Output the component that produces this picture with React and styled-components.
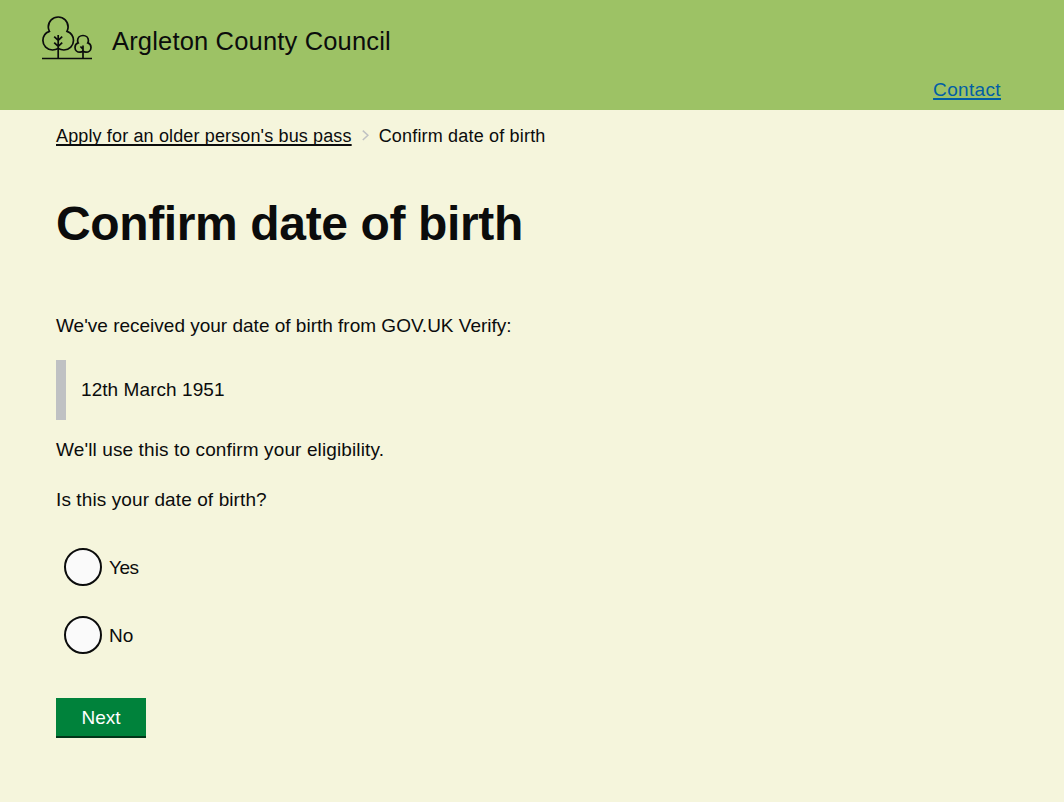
import React from "react";
import styled, { createGlobalStyle } from "styled-components";

const GlobalStyle = createGlobalStyle`
  html, body { margin: 0; background: #f5f5dc; }
  body {
    font-family: "Helvetica Neue", "Liberation Sans", Arial, sans-serif;
    font-size: 19px;
    line-height: 25px;
    color: #0b0c0c;
    -webkit-font-smoothing: antialiased;
  }
`;

const Header = styled.header`
  box-sizing: border-box;
  height: 110px;
  padding: 16px 63px 8px 42px;
  background: #9dc265;
  display: flex;
  flex-direction: column;
  justify-content: space-between;
`;

const Brand = styled.div`
  display: flex;
  align-items: flex-start;
  gap: 20px;
`;

const Logo = styled.svg`
  display: block;
  width: 50px;
  height: 45px;
`;

const CouncilName = styled.span`
  font-size: 25.5px;
  line-height: 30px;
  padding-top: 10px;
  letter-spacing: ${(p) => p.$track || 0}px;
`;

const Text = styled.span`
  letter-spacing: ${(p) => p.$track || 0}px;
`;

const Nav = styled.nav`
  display: flex;
  justify-content: flex-end;
`;

const Link = styled.a`
  color: ${(p) => p.$color || "#0b0c0c"};
  letter-spacing: ${(p) => p.$track || 0}px;
  text-decoration: underline;
  text-decoration-thickness: 2px;
  text-underline-offset: 2px;
  text-decoration-skip-ink: none;
`;

const Main = styled.main`
  padding: 14px 56px 0;
`;

const Breadcrumbs = styled.nav`
  display: flex;
  align-items: center;
  height: 25px;
  font-size: 18px;
`;

const Chevron = styled.svg`
  width: 7px;
  height: 12px;
  margin: 0 10px 2px;
`;

const Title = styled.h1`
  margin: 50px 0 64px;
  font-size: 48px;
  line-height: 50px;
  font-weight: 700;
  letter-spacing: ${(p) => p.$track || 0}px;
`;

const Paragraph = styled.p`
  margin: 0 0 25px;
`;

const Inset = styled.div`
  margin: -3px 0 17px;
  padding: 17px 15px 18px;
  border-left: 10px solid #bfc1c3;
`;

const Options = styled.div`
  display: flex;
  flex-direction: column;
  gap: 30px;
  padding: 11px 0 0 8px;
`;

const Option = styled.label`
  display: flex;
  align-items: center;
  gap: 7px;
  height: 38px;
`;

const Radio = styled.input`
  appearance: none;
  box-sizing: border-box;
  width: 38px;
  height: 38px;
  margin: 0;
  border: 2px solid #0b0c0c;
  border-radius: 50%;
  background: #fafafa;
`;

const Button = styled.button`
  display: block;
  box-sizing: border-box;
  width: 90px;
  height: 40px;
  margin-top: 44px;
  padding: 0;
  border: 0;
  border-bottom: 2px solid #003618;
  background: #00823b;
  color: #fff;
  font: inherit;
`;

function Trees() {
  return (
    <Logo viewBox="0 0 50 45" fill="none" stroke="#0b0c0c" strokeWidth="1.7" aria-hidden="true">
      <path d="M0 42.5H50" />
      <path d="M16.2 42.4V19M12.2 20.6l4 3.8 4-3.8M12.2 26.6l4 3.8 4-3.8" />
      <path d="M16.2 32.6C14.3 33.6 12.5 34 10.5 34C5 34 .9 29.6 .9 24.6C.9 20.2 3.6 16.8 7.4 15.4C6.7 14 6.3 12.5 6.3 11C6.3 5.2 10.7 1 16.2 1S26.1 5.2 26.1 11C26.1 12.5 25.7 14 25 15.4C28.8 16.8 31.5 20.2 31.5 24.6C31.5 29.6 27.4 34 21.9 34C19.9 34 18.1 33.6 16.2 32.6Z" />
      <path d="M41 42.4V29.5M38.4 30.5l2.6 2.6" />
      <path d="M41 35.3C40.1 35.9 39.1 36.2 38 36.2C35.2 36.2 33 34.1 33 31.4C33 29.2 34.3 27.5 36.2 26.9C35.8 26.2 35.6 25.4 35.6 24.6C35.6 21.7 38 19.5 41 19.5S46.4 21.7 46.4 24.6C46.4 25.4 46.2 26.2 45.8 26.9C47.7 27.5 49 29.2 49 31.4C49 34.1 46.8 36.2 44 36.2C42.9 36.2 41.9 35.9 41 35.3Z" />
    </Logo>
  );
}

export default function App() {
  return (
    <>
      <GlobalStyle />
      <Header>
        <Brand>
          <Trees />
          <CouncilName $track={0.17}>Argleton County Council</CouncilName>
        </Brand>
        <Nav>
          <Link href="#" $color="#005ea5" $track={0.35}>Contact</Link>
        </Nav>
      </Header>
      <Main>
        <Breadcrumbs>
          <Link href="#" $track={0.14}>Apply for an older person's bus pass</Link>
          <Chevron viewBox="0 0 7 12" fill="none" stroke="#bfc1c3" strokeWidth="1.5" aria-hidden="true">
            <path d="M.8 .6L5.9 5.3L.8 10" />
          </Chevron>
          <Text $track={0.18}>Confirm date of birth</Text>
        </Breadcrumbs>
        <Title $track={-0.37}>Confirm date of birth</Title>
        <Paragraph><Text>We've received your date of birth from GOV.UK Verify:</Text></Paragraph>
        <Inset><Text $track={0.07}>12th March 1951</Text></Inset>
        <Paragraph><Text $track={0.12}>We'll use this to confirm your eligibility.</Text></Paragraph>
        <Paragraph><Text $track={0.1}>Is this your date of birth?</Text></Paragraph>
        <Options>
          <Option><Radio type="radio" name="dob" /><Text $track={-0.5}>Yes</Text></Option>
          <Option><Radio type="radio" name="dob" /><Text>No</Text></Option>
        </Options>
        <Button type="button">Next</Button>
      </Main>
    </>
  );
}
